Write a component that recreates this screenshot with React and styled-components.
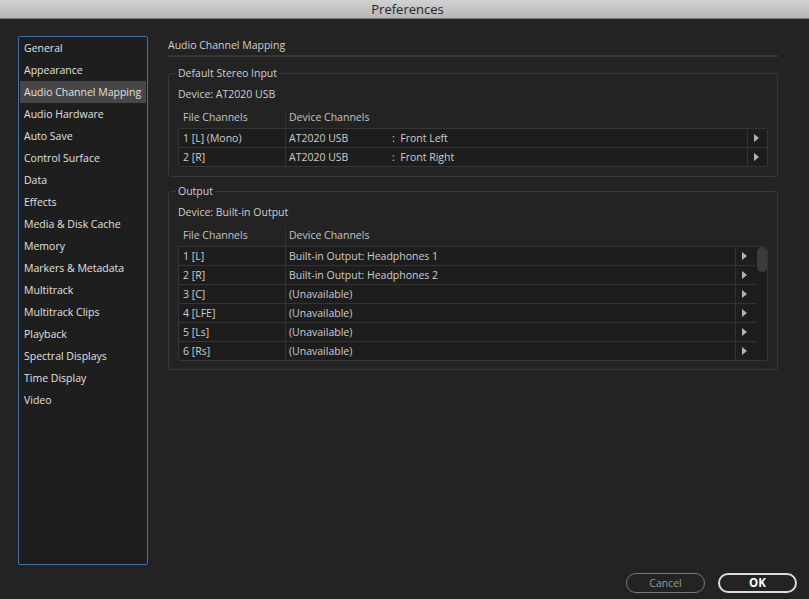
import React from "react";
import styled, { createGlobalStyle } from "styled-components";

const Global = createGlobalStyle`
  html, body { margin: 0; padding: 0; background: #232323; }
  body { font-family: "Open Sans", "Noto Sans", Arial, sans-serif; }
  * { box-sizing: border-box; }
`;

const Window = styled.div`
  width: 809px;
  height: 599px;
  display: flex;
  flex-direction: column;
  background: #232323;
  overflow: hidden;
`;

const TitleBar = styled.div`
  height: 19px;
  flex: none;
  display: flex;
  align-items: center;
  justify-content: center;
  background: linear-gradient(#d2d2d2, #b6b6b6);
  border-bottom: 1px solid #7c7c7c;
  color: #262626;
  font-size: 13px;
  padding-left: 6px;
`;

const Body = styled.div`
  flex: 1;
  display: flex;
  padding: 17px 0 0 18px;
  gap: 20px;
`;

const Sidebar = styled.ul`
  list-style: none;
  margin: 0;
  padding: 0 1px;
  width: 130px;
  height: 529px;
  background: #1e1e1e;
  border: 1px solid #3f6fa3;
  border-radius: 2px;
`;

const NavItem = styled.li`
  height: 22px;
  display: flex;
  align-items: center;
  padding-left: 4px;
  font-size: 10.5px;
  color: #e0e0e0;
  white-space: nowrap;
  background: ${(p) => (p.$active ? "#474747" : "transparent")};
`;

const Main = styled.div`
  width: 610px;
  display: flex;
  flex-direction: column;
`;

const PageTitle = styled.div`
  font-size: 10.5px;
  color: #cfcfcf;
  line-height: 14px;
  padding-top: 2px;
  padding-bottom: 3px;
  border-bottom: 2px solid #353535;
  margin-bottom: 9px;
`;

const Group = styled.fieldset`
  margin: 0 0 ${(p) => p.$gap}px 0;
  padding: 7px 9px ${(p) => p.$bottom}px 9px;
  border: 1px solid #383838;
  border-radius: 3px;
  min-width: 0;
`;

const Legend = styled.legend`
  padding: 0 2px;
  margin-left: -2px;
  font-size: 10.5px;
  line-height: 14px;
  color: #cfcfcf;
`;

const DeviceLine = styled.div`
  font-size: 10.5px;
  line-height: 14px;
  color: #cfcfcf;
  margin-bottom: 10px;
`;

const HeaderRow = styled.div`
  display: flex;
  height: 17px;
  font-size: 10.5px;
  line-height: 13px;
  color: #c4c4c4;
`;

const HeadCell = styled.div`
  width: ${(p) => p.$w}px;
  flex: ${(p) => (p.$w ? "none" : 1)};
  padding-left: ${(p) => p.$pl}px;
  border-left: ${(p) => (p.$divider ? "1px solid #333" : "none")};
`;

const Table = styled.div`
  display: flex;
  background: #1d1d1d;
  border: 1px solid #353535;
  border-radius: 2px;
`;

const Rows = styled.div`
  flex: 1;
  display: flex;
  flex-direction: column;
`;

const Row = styled.div`
  display: flex;
  height: ${(p) => (p.$first ? 18 : 19)}px;
  border-top: ${(p) => (p.$first ? "none" : "1px solid #343434")};
  font-size: 10.5px;
  color: #cdcdcd;
  align-items: stretch;
`;

const Cell = styled.div`
  display: flex;
  align-items: center;
  white-space: pre;
  width: ${(p) => (p.$w ? `${p.$w}px` : "auto")};
  flex: ${(p) => (p.$w ? "none" : 1)};
  padding-left: ${(p) => p.$pl || 0}px;
  border-left: ${(p) => (p.$divider ? "1px solid #333" : "none")};
`;

const DevName = styled.span`
  width: 103px;
  flex: none;
`;

const ArrowCell = styled.div`
  width: ${(p) => p.$w}px;
  flex: none;
  border-left: 1px solid #333;
  display: flex;
  align-items: center;
  padding-left: 6px;
`;

const Arrow = styled.span`
  width: 0;
  height: 0;
  border-top: 4px solid transparent;
  border-bottom: 4px solid transparent;
  border-left: 5px solid #b4b4b4;
`;

const ScrollTrack = styled.div`
  width: 11px;
  flex: none;
  padding: 0 0 0 1px;
`;

const Thumb = styled.div`
  width: 10px;
  height: 25px;
  border-radius: 5px;
  background: #3b3b3b;
`;

const Footer = styled.div`
  height: 33px;
  flex: none;
  display: flex;
  justify-content: flex-end;
  align-items: flex-start;
  gap: 13px;
  padding: 7px 12px 0 0;
`;

const Button = styled.button`
  width: 79px;
  height: 20px;
  border-radius: 10px;
  background: transparent;
  font-family: "Open Sans", "Noto Sans", Arial, sans-serif;
  font-size: ${(p) => (p.$primary ? 11.5 : 10.5)}px;
  font-weight: ${(p) => (p.$primary ? 700 : 400)};
  color: ${(p) => (p.$primary ? "#ffffff" : "#9a9a9a")};
  border: ${(p) => (p.$primary ? "2px solid #dcdcdc" : "1.5px solid #7a7a7a")};
  padding: 0;
  line-height: 1;
`;

const navItems = [
  "General",
  "Appearance",
  "Audio Channel Mapping",
  "Audio Hardware",
  "Auto Save",
  "Control Surface",
  "Data",
  "Effects",
  "Media & Disk Cache",
  "Memory",
  "Markers & Metadata",
  "Multitrack",
  "Multitrack Clips",
  "Playback",
  "Spectral Displays",
  "Time Display",
  "Video",
];

const inputRows = [
  { file: "1 [L] (Mono)", dev: "AT2020 USB", ch: ":  Front Left" },
  { file: "2 [R]", dev: "AT2020 USB", ch: ":  Front Right" },
];

const outputRows = [
  { file: "1 [L]", dev: "Built-in Output: Headphones 1" },
  { file: "2 [R]", dev: "Built-in Output: Headphones 2" },
  { file: "3 [C]", dev: "(Unavailable)" },
  { file: "4 [LFE]", dev: "(Unavailable)" },
  { file: "5 [Ls]", dev: "(Unavailable)" },
  { file: "6 [Rs]", dev: "(Unavailable)" },
];

function Headers() {
  return (
    <HeaderRow>
      <HeadCell $w={107} $pl={5}>File Channels</HeadCell>
      <HeadCell $pl={3} $divider>Device Channels</HeadCell>
    </HeaderRow>
  );
}

export default function App() {
  return (
    <>
      <Global />
      <Window>
        <TitleBar>Preferences</TitleBar>
        <Body>
          <Sidebar>
            {navItems.map((n) => (
              <NavItem key={n} $active={n === "Audio Channel Mapping"}>
                {n}
              </NavItem>
            ))}
          </Sidebar>
          <Main>
            <PageTitle>Audio Channel Mapping</PageTitle>
            <Group $bottom={9} $gap={7}>
              <Legend>Default Stereo Input</Legend>
              <DeviceLine>Device: AT2020 USB</DeviceLine>
              <Headers />
              <Table>
                <Rows>
                  {inputRows.map((r, i) => (
                    <Row key={r.file} $first={i === 0}>
                      <Cell $w={106} $pl={4}>{r.file}</Cell>
                      <Cell $pl={3} $divider>
                        <DevName>{r.dev}</DevName>
                        {r.ch}
                      </Cell>
                      <ArrowCell $w={20}>
                        <Arrow />
                      </ArrowCell>
                    </Row>
                  ))}
                </Rows>
              </Table>
            </Group>
            <Group $bottom={8} $gap={0}>
              <Legend>Output</Legend>
              <DeviceLine>Device: Built-in Output</DeviceLine>
              <Headers />
              <Table>
                <Rows>
                  {outputRows.map((r, i) => (
                    <Row key={r.file} $first={i === 0}>
                      <Cell $w={106} $pl={4}>{r.file}</Cell>
                      <Cell $pl={3} $divider>{r.dev}</Cell>
                      <ArrowCell $w={21}>
                        <Arrow />
                      </ArrowCell>
                    </Row>
                  ))}
                </Rows>
                <ScrollTrack>
                  <Thumb />
                </ScrollTrack>
              </Table>
            </Group>
          </Main>
        </Body>
        <Footer>
          <Button>Cancel</Button>
          <Button $primary>OK</Button>
        </Footer>
      </Window>
    </>
  );
}
